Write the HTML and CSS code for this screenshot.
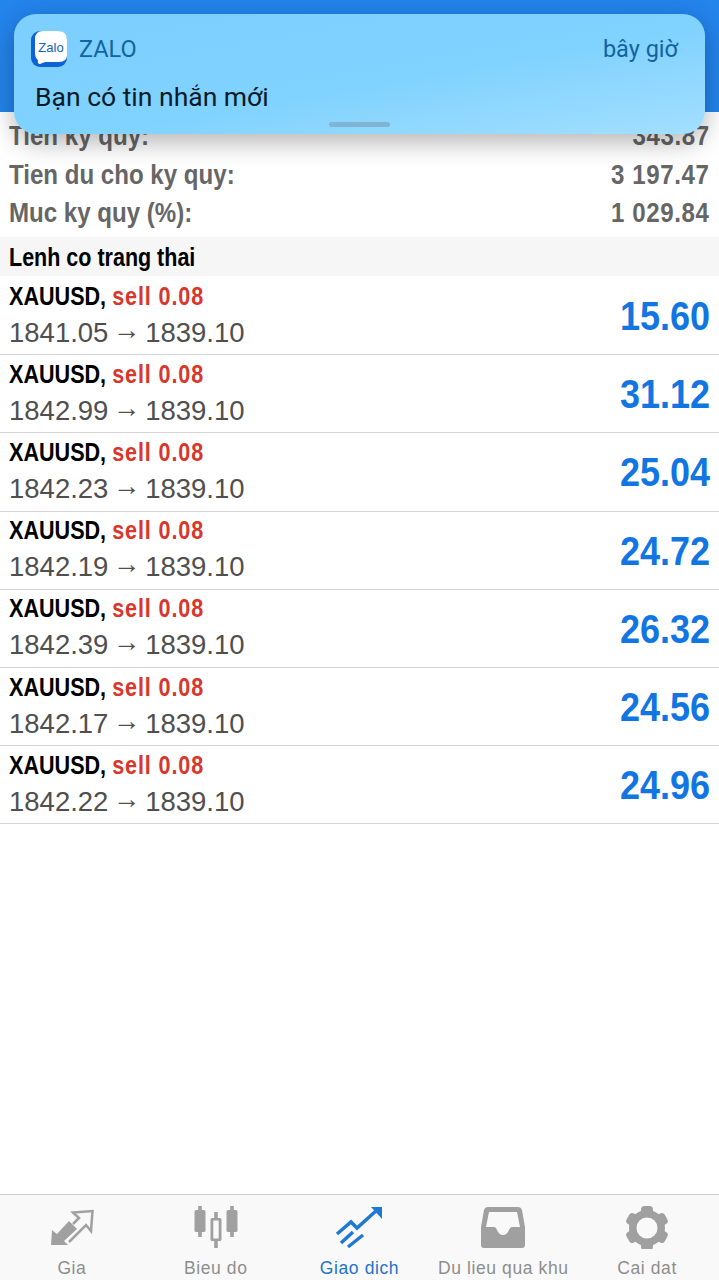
FILE: index.html
```html
<!DOCTYPE html>
<html lang="vi">
<head>
    <meta charset="UTF-8">
    <meta name="viewport" content="width=device-width, initial-scale=1.0">
    <title>Giao dich</title>
    <link rel="stylesheet" href="styles.css">
</head>
<body>
<div class="notification">
    <div class="notification-top">
        <svg class="zalo-icon" viewBox="0 0 36 36">
            <rect x="0" y="0" width="36" height="36" rx="9" fill="#0d62d6"/>
            <path d="M12 0H27Q36 0 36 9V24Q36 31 28 31H14L9 33Q6 33 7 29Q4 27 4 22V8Q4 0 12 0Z" fill="#fff"/>
            <text x="20" y="21" text-anchor="middle" class="zalo-text">Zalo</text>
        </svg>
        <span class="app-name">ZALO</span>
        <span class="time">bây giờ</span>
    </div>
    <div class="message">Bạn có tin nhắn mới</div>
    <div class="handle"></div>
</div>

<div class="topbar"></div>

<div class="summary">
    <div class="summary-row"><span class="summary-label">Tien ky quy:</span><span class="summary-value">343.87</span></div>
    <div class="summary-row"><span class="summary-label">Tien du cho ky quy:</span><span class="summary-value">3 197.47</span></div>
    <div class="summary-row"><span class="summary-label">Muc ky quy (%):</span><span class="summary-value">1 029.84</span></div>
</div>

<div class="section-title"><span>Lenh co trang thai</span></div>

<div class="orders">
    <div class="order">
        <div class="order-left">
            <div class="order-name">XAUUSD, <span class="sell">sell 0.08</span></div>
            <div class="order-price">1841.05 <span class="arrow">→</span> 1839.10</div>
        </div>
        <div class="order-profit">15.60</div>
    </div>
    <div class="order">
        <div class="order-left">
            <div class="order-name">XAUUSD, <span class="sell">sell 0.08</span></div>
            <div class="order-price">1842.99 <span class="arrow">→</span> 1839.10</div>
        </div>
        <div class="order-profit">31.12</div>
    </div>
    <div class="order">
        <div class="order-left">
            <div class="order-name">XAUUSD, <span class="sell">sell 0.08</span></div>
            <div class="order-price">1842.23 <span class="arrow">→</span> 1839.10</div>
        </div>
        <div class="order-profit">25.04</div>
    </div>
    <div class="order">
        <div class="order-left">
            <div class="order-name">XAUUSD, <span class="sell">sell 0.08</span></div>
            <div class="order-price">1842.19 <span class="arrow">→</span> 1839.10</div>
        </div>
        <div class="order-profit">24.72</div>
    </div>
    <div class="order">
        <div class="order-left">
            <div class="order-name">XAUUSD, <span class="sell">sell 0.08</span></div>
            <div class="order-price">1842.39 <span class="arrow">→</span> 1839.10</div>
        </div>
        <div class="order-profit">26.32</div>
    </div>
    <div class="order">
        <div class="order-left">
            <div class="order-name">XAUUSD, <span class="sell">sell 0.08</span></div>
            <div class="order-price">1842.17 <span class="arrow">→</span> 1839.10</div>
        </div>
        <div class="order-profit">24.56</div>
    </div>
    <div class="order">
        <div class="order-left">
            <div class="order-name">XAUUSD, <span class="sell">sell 0.08</span></div>
            <div class="order-price">1842.22 <span class="arrow">→</span> 1839.10</div>
        </div>
        <div class="order-profit">24.96</div>
    </div>
</div>

<div class="tabbar">
    <div class="tab">
        <svg class="tab-icon" viewBox="0 0 56 44">
            <path d="M7 40L8 25L13 29L25 16L33 24L20 36L24 40Z" fill="#a0a0a0"/>
            <path d="M25 37L42 20L47 26L48.500 6L29 7.500L35 13L29 19" fill="none" stroke="#a0a0a0" stroke-width="2.500"/>
        </svg>
        <span>Gia</span>
    </div>
    <div class="tab">
        <svg class="tab-icon" viewBox="0 0 56 44">
            <path d="M10.200 1H13.800V5H16Q17.500 5 17.500 6.500V25.500Q17.500 27 16 27H13.800V32H10.200V27H8Q6.500 27 6.500 25.500V6.500Q6.500 5 8 5H10.200Z" fill="#a0a0a0"/>
            <path d="M26.200 7H29.800V13H32Q33.500 13 33.500 14.500V34.500Q33.500 36 32 36H29.800V43H26.200V36H24Q22.500 36 22.500 34.500V14.500Q22.500 13 24 13H26.200ZM25.300 15.500V33.500H30.700V15.500Z" fill="#a0a0a0" fill-rule="evenodd"/>
            <path d="M42.200 1H45.800V5H48Q49.500 5 49.500 6.500V25.500Q49.500 27 48 27H45.800V32H42.200V27H40Q38.500 27 38.500 25.500V6.500Q38.500 5 40 5H42.200Z" fill="#a0a0a0"/>
        </svg>
        <span>Bieu do</span>
    </div>
    <div class="tab tab-active">
        <svg class="tab-icon" viewBox="0 0 56 44">
            <path d="M6 29L20 17L26 23L46 5" fill="none" stroke="#1f78d6" stroke-width="3.500"/>
            <path d="M40 2H51V14Z" fill="#1f78d6"/>
            <path d="M10 38L22 27" fill="none" stroke="#1f78d6" stroke-width="3.500"/>
            <path d="M17 42L32 30" fill="none" stroke="#1f78d6" stroke-width="3.500"/>
        </svg>
        <span>Giao dich</span>
    </div>
    <div class="tab">
        <svg class="tab-icon" viewBox="0 0 56 44">
            <path d="M13 2H43Q46 2 47 5L50 22V40Q50 43 47 43H9Q6 43 6 40V22L9 5Q10 2 13 2ZM14 7L11 22H19Q21 22 22 25Q24 30 28 30Q32 30 34 25Q35 22 37 22H45L42 7Z" fill="#a0a0a0" fill-rule="evenodd"/>
        </svg>
        <span>Du lieu qua khu</span>
    </div>
    <div class="tab">
        <svg class="tab-icon" viewBox="0 0 56 44">
            <circle cx="28" cy="23" r="18" fill="#a0a0a0"/>
            <rect x="22" y="1" width="12" height="44" rx="3.500" fill="#a0a0a0"/>
            <rect x="22" y="1" width="12" height="44" rx="3.500" fill="#a0a0a0" transform="rotate(60 28 23)"/>
            <rect x="22" y="1" width="12" height="44" rx="3.500" fill="#a0a0a0" transform="rotate(120 28 23)"/>
            <circle cx="28" cy="23" r="10.500" fill="#f9f9f9"/>
        </svg>
        <span>Cai dat</span>
    </div>
</div>
</body>
</html>
```
FILE: styles.css
```css
/* Liberation Sans bold is squeezed with scaleX to get the condensed look */
* {
    box-sizing: border-box;
}
body {
    position: relative;
    display: flex;
    flex-direction: column;
    width: 719px;
    height: 1280px;
    margin: 0;
    overflow: hidden;
    font-family: "Liberation Sans", Arial, sans-serif;
    background-color: #fff;
    color: #000;
}
.topbar {
    height: 112px;
    background-color: #2384ec;
}
.notification {
    position: absolute;
    z-index: 1;
    top: 14px;
    left: 14px;
    width: 691px;
    height: 120px;
    padding: 17px 27px 0 17px;
    border-radius: 22px;
    background: linear-gradient(170deg, #7ccffe 0%, #80d2ff 55%, #a3dfff 100%);
    box-shadow: 0 8px 26px rgba(0, 0, 0, 0.3);
}
.notification-top {
    display: flex;
    align-items: center;
    height: 36px;
}
.zalo-icon {
    width: 36px;
    height: 36px;
}
.zalo-text {
    font-family: "Liberation Sans", Arial, sans-serif;
    font-size: 13px;
    fill: #1a5fc0;
}
.app-name {
    margin-left: 12px;
    font-family: Roboto, sans-serif;
    font-size: 23.500px;
    color: #12649f;
}
.time {
    margin-left: auto;
    font-family: Roboto, sans-serif;
    font-size: 23.500px;
    color: #12649f;
}
.message {
    margin: 14px 0 0 4px;
    font-family: Roboto, sans-serif;
    font-size: 26.500px;
    color: #0a1a26;
}
.handle {
    position: absolute;
    left: 315px;
    bottom: 7px;
    width: 61px;
    height: 5px;
    border-radius: 3px;
    background-color: #7fb4d2;
}
.summary {
    height: 125px;
    padding: 5px 9px 0 9px;
}
.summary-row {
    display: flex;
    justify-content: space-between;
    height: 38.500px;
    line-height: 38.500px;
    font-size: 28px;
    font-weight: bold;
    color: #666;
}
.summary-label {
    transform: scaleX(0.86);
    transform-origin: left;
}
.summary-value {
    letter-spacing: 0.700px;
    transform: scaleX(0.86);
    transform-origin: right;
}
.section-title {
    height: 39px;
    padding-left: 9px;
    line-height: 41px;
    font-size: 25px;
    font-weight: bold;
    background-color: #f6f6f6;
}
.section-title span {
    display: inline-block;
    transform: scaleX(0.86);
    transform-origin: left;
}
.orders {
    flex: 1;
    padding-top: 1px;
}
.order {
    display: flex;
    justify-content: space-between;
    align-items: center;
    height: 78.200px;
    padding: 0 9px 2px 9px;
    border-bottom: 1px solid #d4d4d4;
}
.order-name {
    font-size: 26px;
    line-height: 32px;
    font-weight: bold;
    transform: scaleX(0.83);
    transform-origin: left;
}
.sell {
    letter-spacing: 1.070px;
    color: #d8372c;
}
.order-price {
    font-size: 27.500px;
    line-height: 35px;
    color: #4f4f4f;
}
.arrow {
    margin: 0 -3px;
    vertical-align: 3px;
}
.order-profit {
    margin-top: 4px;
    font-size: 40px;
    font-weight: bold;
    color: #1276e2;
    transform: scaleX(0.9);
    transform-origin: right;
}
.tabbar {
    display: grid;
    grid-template-columns: repeat(5, 1fr);
    height: 86px;
    border-top: 1px solid #cfcfcf;
    background-color: #f9f9f9;
}
.tab {
    display: flex;
    flex-direction: column;
    align-items: center;
    padding-top: 10px;
    font-size: 17.500px;
    letter-spacing: 0.600px;
    color: #8e8e8e;
}
.tab span {
    margin-top: 9px;
    line-height: 20px;
}
.tab-active {
    color: #1e74c8;
}
.tab-icon {
    width: 56px;
    height: 44px;
}
```
